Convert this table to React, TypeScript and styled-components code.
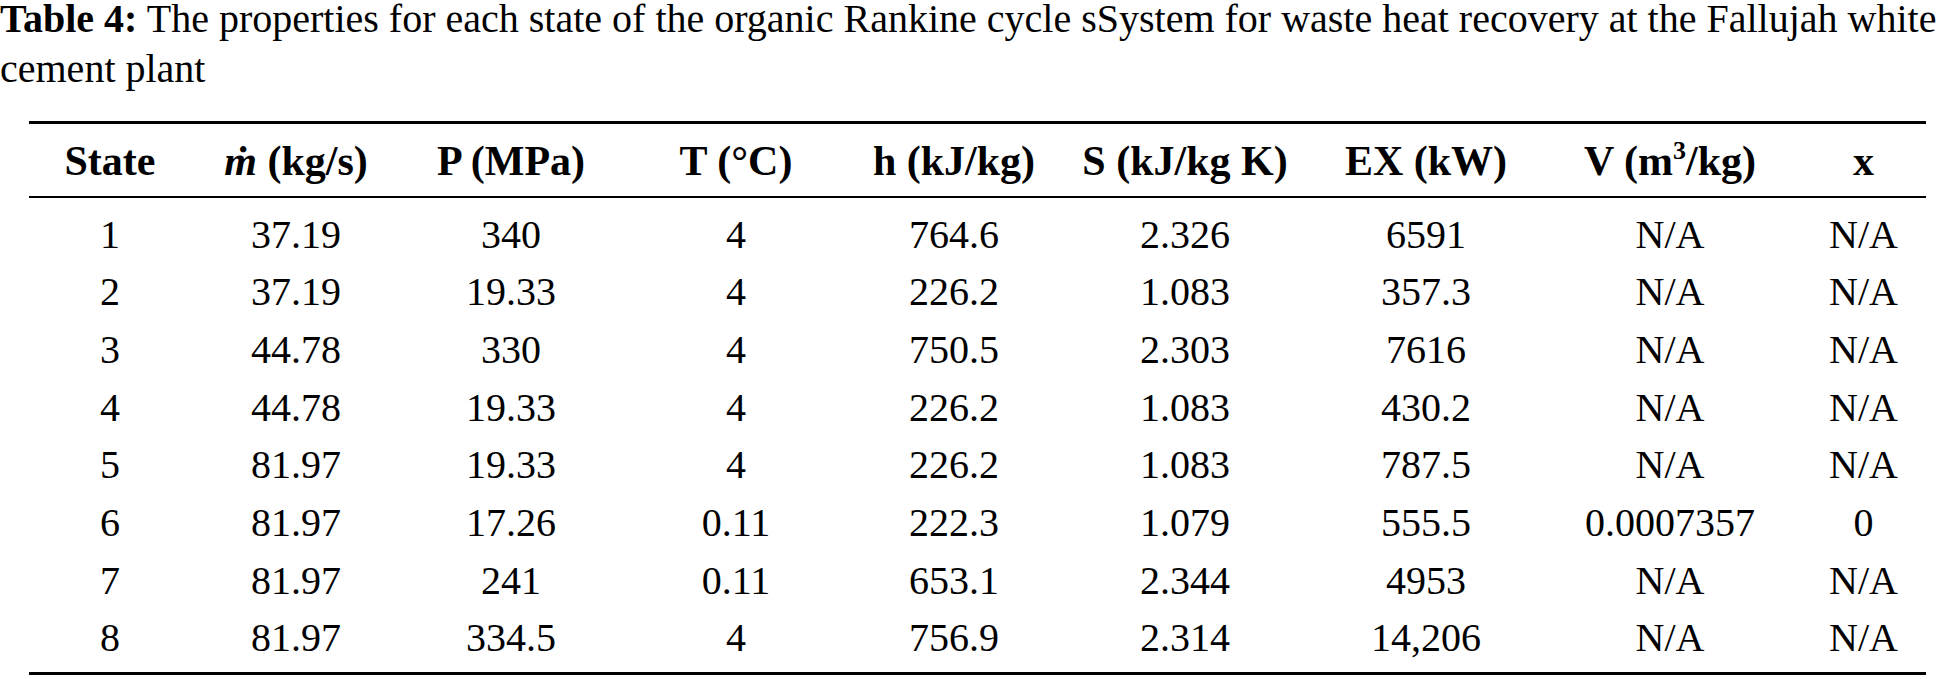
import React from 'react';
import styled, { createGlobalStyle } from 'styled-components';

const GlobalStyle = createGlobalStyle`
  html, body {
    margin: 0;
    padding: 0;
    background: #ffffff;
  }
  body {
    font-family: "Liberation Serif", "Times New Roman", serif;
    color: #000000;
  }
`;

const COLUMNS = '162px 210px 220px 230px 206px 256px 226px 262px 125px';

const Page = styled.div`
  width: 1956px;
  height: 679px;
  overflow: hidden;
`;

const Caption = styled.div`
  font-size: 40px;
  line-height: 37px;
`;

const CaptionLine = styled.div<{ $gap?: number }>`
  white-space: nowrap;
  margin-top: ${(p) => p.$gap ?? 0}px;
`;

const Label = styled.b`
  font-weight: 700;
`;

const Table = styled.div`
  margin: 34px 0 0 29px;
  width: 1897px;
  border-top: 3px solid #000;
  border-bottom: 3px solid #000;
`;

const Head = styled.div`
  display: grid;
  grid-template-columns: ${COLUMNS};
  height: 70px;
  padding-top: 2px;
  border-bottom: 2px solid #000;
  font-size: 42px;
  font-weight: 700;
  line-height: 70px;
`;

const Body = styled.div`
  padding: 7.6px 0 5px;
`;

const Row = styled.div`
  display: grid;
  grid-template-columns: ${COLUMNS};
  height: 57.7px;
  font-size: 40px;
  line-height: 57.7px;
`;

const Cell = styled.div`
  text-align: center;
  white-space: nowrap;
`;

const MassFlow = styled.i`
  font-style: italic;
`;

const Sup = styled.sup`
  font-size: 26px;
  line-height: 0;
  vertical-align: 16px;
`;

const rows: string[][] = [
  ['1', '37.19', '340', '4', '764.6', '2.326', '6591', 'N/A', 'N/A'],
  ['2', '37.19', '19.33', '4', '226.2', '1.083', '357.3', 'N/A', 'N/A'],
  ['3', '44.78', '330', '4', '750.5', '2.303', '7616', 'N/A', 'N/A'],
  ['4', '44.78', '19.33', '4', '226.2', '1.083', '430.2', 'N/A', 'N/A'],
  ['5', '81.97', '19.33', '4', '226.2', '1.083', '787.5', 'N/A', 'N/A'],
  ['6', '81.97', '17.26', '0.11', '222.3', '1.079', '555.5', '0.0007357', '0'],
  ['7', '81.97', '241', '0.11', '653.1', '2.344', '4953', 'N/A', 'N/A'],
  ['8', '81.97', '334.5', '4', '756.9', '2.314', '14,206', 'N/A', 'N/A'],
];

const App = () => (
  <Page>
    <GlobalStyle />
    <Caption>
      <CaptionLine>
        <Label>Table 4:</Label> The properties for each state of the organic Rankine cycle sSystem for waste heat recovery at the Fallujah white
      </CaptionLine>
      <CaptionLine $gap={13}>cement plant</CaptionLine>
    </Caption>
    <Table>
      <Head>
        <Cell>State</Cell>
        <Cell><MassFlow>ṁ</MassFlow> (kg/s)</Cell>
        <Cell>P (MPa)</Cell>
        <Cell>T (°C)</Cell>
        <Cell>h (kJ/kg)</Cell>
        <Cell>S (kJ/kg K)</Cell>
        <Cell>EX (kW)</Cell>
        <Cell>V (m<Sup>3</Sup>/kg)</Cell>
        <Cell>x</Cell>
      </Head>
      <Body>
        {rows.map((row) => (
          <Row key={row[0]}>
            {row.map((value, i) => (
              <Cell key={i}>{value}</Cell>
            ))}
          </Row>
        ))}
      </Body>
    </Table>
  </Page>
);

export default App;
